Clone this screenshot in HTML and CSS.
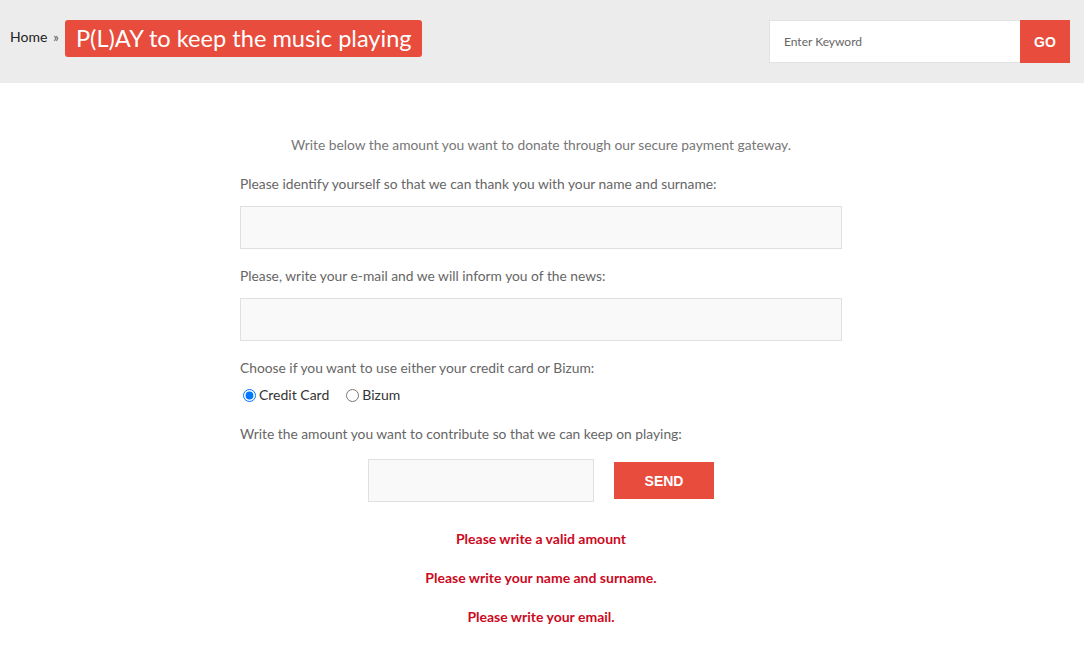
FILE: index.html
```html
<!DOCTYPE html>
<html lang="en">
<head>
    <meta charset="UTF-8">
    <meta name="viewport" content="width=device-width, initial-scale=1.0">
    <title>P(L)AY to keep the music playing</title>
    <link rel="stylesheet" href="styles.css">
</head>
<body>
    <header class="topbar">
        <div class="crumbs">
            <a href="#" class="home">Home</a>
            <span class="sep">&raquo;</span>
            <h1 class="badge">P(L)AY to keep the music playing</h1>
        </div>
        <form class="search">
            <input type="text" placeholder="Enter Keyword">
            <button type="button">GO</button>
        </form>
    </header>

    <main class="donate">
        <p class="intro">Write below the amount you want to donate through our secure payment gateway.</p>

        <label for="name">Please identify yourself so that we can thank you with your name and surname:</label>
        <input type="text" id="name" class="field">

        <label for="email">Please, write your e-mail and we will inform you of the news:</label>
        <input type="text" id="email" class="field">

        <label class="choose">Choose if you want to use either your credit card or Bizum:</label>
        <div class="radios">
            <label class="opt"><input type="radio" name="pay" checked>Credit Card</label>
            <label class="opt"><input type="radio" name="pay">Bizum</label>
        </div>

        <label for="amount" class="amount-label">Write the amount you want to contribute so that we can keep on playing:</label>
        <div class="amount-row">
            <input type="text" id="amount" class="amount">
            <button type="button" class="send">SEND</button>
        </div>

        <div class="errors">
            <p>Please write a valid amount</p>
            <p>Please write your name and surname.</p>
            <p>Please write your email.</p>
        </div>
    </main>
</body>
</html>
```

FILE: styles.css
```css
body {
    margin: 0;
    font-family: Lato, "Open Sans", sans-serif;
    font-size: 13.8px;
    line-height: 20px;
    background: #fff;
    color: #666;
}
.topbar {
    background: #ececec;
    height: 83px;
    display: flex;
    justify-content: space-between;
    align-items: flex-start;
    padding: 0 14px 0 10px;
    box-sizing: border-box;
}
.crumbs {
    display: flex;
    align-items: center;
    margin-top: 20px;
}
.home {
    color: #222;
    text-decoration: none;
    font-size: 14px;
    margin-top: -4px;
}
.sep {
    color: #555;
    font-size: 13px;
    margin: -3px 6px 0 6px;
}
.badge {
    margin: 0;
    background: #e74c3c;
    color: #fff;
    font-weight: normal;
    font-size: 23.6px;
    line-height: 37px;
    height: 37px;
    padding: 0 10px 0 11px;
    border-radius: 3px;
}
.search {
    display: flex;
    margin-top: 20px;
}
.search input {
    width: 251px;
    height: 43px;
    box-sizing: border-box;
    border: 1px solid #e2e2e2;
    border-right: none;
    background: #fff;
    padding: 0 14px;
    font-family: Lato, sans-serif;
    font-size: 12px;
    outline: none;
}
.search input::placeholder {
    color: #666;
}
.search button {
    width: 50px;
    height: 43px;
    border: none;
    background: #e74c3c;
    color: #fff;
    font-family: "Liberation Sans", Arial, sans-serif;
    font-weight: bold;
    font-size: 14px;
    padding: 0;
}
.donate {
    width: 602px;
    margin: 0 auto;
    padding-top: 52px;
    padding-right: 2px;
}
.intro {
    text-align: center;
    color: #777;
    margin: 0 0 19px;
}
.donate > label {
    display: block;
    color: #666;
    margin-bottom: 12px;
}
.field {
    display: block;
    width: 100%;
    height: 43px;
    box-sizing: border-box;
    background: #f9f9f9;
    border: 1px solid #e0e0e0;
    margin: 0 0 17px;
    outline: none;
}
.donate > label.choose {
    margin-bottom: 7px;
}
.radios {
    display: flex;
    gap: 14px;
    margin-bottom: 19px;
}
.opt {
    display: flex;
    align-items: center;
    color: #333;
    font-size: 14px;
}
.opt input {
    margin: 1px 3px 0 3px;
    width: 13px;
    height: 13px;
}
.donate > label.amount-label {
    margin-bottom: 15px;
}
.amount-row {
    display: flex;
    justify-content: center;
    align-items: center;
    gap: 20px;
}
.amount {
    width: 226px;
    height: 43px;
    box-sizing: border-box;
    background: #f9f9f9;
    border: 1px solid #e0e0e0;
    outline: none;
}
.send {
    width: 100px;
    height: 37px;
    border: none;
    background: #e74c3c;
    color: #fff;
    font-family: "Liberation Sans", Arial, sans-serif;
    font-weight: bold;
    font-size: 14px;
    padding: 0;
}
.errors {
    margin-top: 27px;
    text-align: center;
}
.errors p {
    margin: 0 0 19px;
    color: #cc0a1e;
    font-weight: bold;
    font-size: 14px;
}
```
